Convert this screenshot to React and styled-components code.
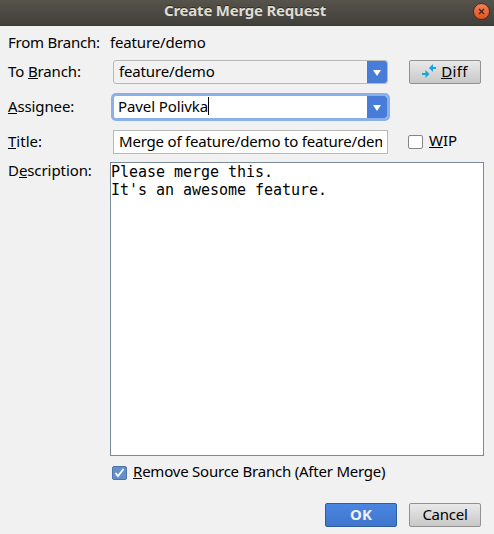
import React from "react";
import styled, { createGlobalStyle, css } from "styled-components";

const GlobalStyle = createGlobalStyle`
  * { box-sizing: border-box; }
  body { margin: 0; background: #f1f1f1; overflow: hidden; }
`;

const Dialog = styled.div`
  width: 494px;
  height: 534px;
  background: #f1f1f1;
  color: #000;
  font: 15px/20px "Noto Sans", "Open Sans", sans-serif;
  display: flex;
  flex-direction: column;
`;

const TitleBar = styled.header`
  height: 26px;
  flex: none;
  display: grid;
  grid-template-columns: 26px 1fr 26px;
  align-items: center;
  background: linear-gradient(#56534b, #403f3a);
  border-bottom: 1px solid #3a3934;
`;

const Heading = styled.h1`
  grid-column: 2;
  margin: 0 0 5px;
  padding-right: 4px;
  text-align: center;
  font-size: 15px;
  line-height: 20px;
  font-weight: 700;
  letter-spacing: -0.22px;
  color: #dfdbd2;
  text-shadow: 0 -1px 0 #2c2b27;
`;

const CloseButton = styled.button`
  width: 17px;
  height: 17px;
  margin: 0 0 3px 5px;
  padding: 0;
  display: grid;
  place-items: center;
  border: 1px solid #35332e;
  border-radius: 50%;
  background: linear-gradient(#f4805a, #e4501f);
`;

const Form = styled.main`
  padding-left: 8px;
  display: flex;
  flex-direction: column;
`;

const Row = styled.div`
  height: ${(p) => p.$height}px;
  display: grid;
  grid-template-columns: 102px 291px 1fr;
  align-items: ${(p) => p.$align || "center"};
`;

const Text = styled.span`
  letter-spacing: ${(p) => p.$spacing || 0}px;
  white-space: nowrap;
  margin-top: ${(p) => p.$top || 0}px;
  padding-bottom: ${(p) => p.$lift || 0}px;
`;

const Key = styled.span`
  display: inline-block;
  height: 18px;
  line-height: 20px;
  vertical-align: top;
  border-bottom: 1px solid #000;
`;

const focusRing = css`
  box-shadow: 0 0 0 2px #8ab0ea;
  border-color: #8ab0ea;
  border-radius: 3px;
  background: #fff;
`;

const Combo = styled.div`
  width: 275px;
  height: 24px;
  margin-left: 3px;
  padding-left: ${(p) => (p.$focused ? 4 : 5)}px;
  display: flex;
  align-items: center;
  justify-content: space-between;
  border: 1px solid #b8b8b8;
  border-radius: 3px;
  background: #f1f1f1;
  overflow: hidden;
  ${(p) => p.$focused && focusRing}
`;

const Arrow = styled.span`
  width: 20px;
  height: 22px;
  display: grid;
  place-items: center;
  padding-top: 2px;
  background: #477dd8;
  border-radius: 0 2px 2px 0;
`;

const Caret = styled.span`
  display: inline-block;
  width: 1px;
  height: 18px;
  margin-top: 1px;
  vertical-align: top;
  background: #000;
`;

const TitleField = styled.div`
  width: 275px;
  height: 24px;
  margin-left: 3px;
  padding: 0 5px;
  border: 1px solid #b8b8b8;
  background: #fff;
`;

const FieldClip = styled.div`
  width: 263px;
  overflow: hidden;
  white-space: nowrap;
`;

const Description = styled.div`
  width: 374px;
  height: 294px;
  border: 1px solid #7a8a99;
  background: #fff;
  font: 15px/18px "DejaVu Sans Mono", monospace;
  letter-spacing: -0.03px;
  white-space: pre;
`;

const Button = styled.button`
  width: 72px;
  height: 24px;
  margin: 0 0 0 ${(p) => p.$left || 0}px;
  padding: 0 0 2px;
  display: flex;
  align-items: center;
  justify-content: center;
  gap: 5px;
  border: 1px solid ${(p) => (p.$primary ? "#2f5f9b" : "#919191")};
  border-radius: 2px;
  background: ${(p) => (p.$primary ? "linear-gradient(#4a86e2, #4075cb)" : "linear-gradient(#e9e9e9, #c8c8c8)")};
  color: ${(p) => (p.$primary ? "#f1f1f1" : "#000")};
  font: inherit;
  font-weight: ${(p) => (p.$primary ? 700 : 400)};
`;

const CheckLabel = styled.label`
  display: flex;
  align-items: flex-start;
  gap: 6px;
  margin-left: ${(p) => p.$left || 0}px;
`;

const Box = styled.span`
  width: 15px;
  height: 14px;
  margin-top: 5px;
  flex: none;
  display: grid;
  place-items: center;
  border: 1px solid ${(p) => (p.$checked ? "#4c74ab" : "#858585")};
  border-radius: 2px;
  background: ${(p) => (p.$checked ? "#6390cb" : "#fff")};
`;

const Footer = styled.footer`
  display: flex;
  gap: 12px;
  margin-top: 22px;
  padding-right: 13px;
  justify-content: flex-end;
`;

const Triangle = () => (
  <Arrow>
    <svg width="8" height="6" viewBox="0 0 8 6">
      <path d="M0 0h8L4 6z" fill="#fff" />
    </svg>
  </Arrow>
);

const DiffIcon = () => (
  <svg width="14" height="14" viewBox="0 0 14 14" fill="#18a5dc">
    <path d="M7 4l4-4v3h3v2h-3v3z" />
    <path d="M7.5 10l-4-4v3H0v2h3.5v3z" />
  </svg>
);

export default function App() {
  return (
    <>
      <GlobalStyle />
      <Dialog>
        <TitleBar>
          <Heading>Create Merge Request</Heading>
          <CloseButton aria-label="Close">
            <svg width="7" height="7" viewBox="0 0 7 7">
              <path d="M1 1l5 5M6 1L1 6" stroke="#3c2a1c" strokeWidth="1.3" />
            </svg>
          </CloseButton>
        </TitleBar>
        <Form>
          <Row $height={34}>
            <Text $spacing={-0.22} $lift={2}>From Branch:</Text>
            <Text $spacing={-0.15} $lift={2}>feature/demo</Text>
          </Row>
          <Row $height={24}>
            <Text $spacing={-0.12} $lift={2}>To <Key>B</Key>ranch:</Text>
            <Combo>
              <Text $spacing={-0.15} $lift={2}>feature/demo</Text>
              <Triangle />
            </Combo>
            <Button $left={8}>
              <DiffIcon />
              <Text $spacing={0.4}><Key>D</Key>iff</Text>
            </Button>
          </Row>
          <Row $height={46}>
            <Text $spacing={-0.12} $lift={2}><Key>A</Key>ssignee:</Text>
            <Combo $focused>
              <Text $spacing={-0.1} $lift={2}>Pavel Polivka<Caret /></Text>
              <Triangle />
            </Combo>
          </Row>
          <Row $height={32} $align="start">
            <Text $top={1}><Key>T</Key>itle:</Text>
            <TitleField>
              <FieldClip>
                <Text $spacing={-0.19}>Merge of feature/demo to feature/demo</Text>
              </FieldClip>
            </TitleField>
            <CheckLabel $left={7}>
              <Box />
              <Text><Key>W</Key>IP</Text>
            </CheckLabel>
          </Row>
          <Row $height={299} $align="start">
            <Text $spacing={-0.08} $top={-2}>
              D<Key>e</Key>scription:
            </Text>
            <Description>{"Please merge this.\nIt's an awesome feature."}</Description>
          </Row>
          <CheckLabel $left={104}>
            <Box $checked>
              <svg width="11" height="10" viewBox="0 0 11 10">
                <path d="M1.5 5l2.5 3L9.5 1" fill="none" stroke="#fff" strokeWidth="1.8" />
              </svg>
            </Box>
            <Text $spacing={-0.22}><Key>R</Key>emove Source Branch (After Merge)</Text>
          </CheckLabel>
        </Form>
        <Footer>
          <Button $primary>OK</Button>
          <Button><Text $spacing={-0.25}>Cancel</Text></Button>
        </Footer>
      </Dialog>
    </>
  );
}
